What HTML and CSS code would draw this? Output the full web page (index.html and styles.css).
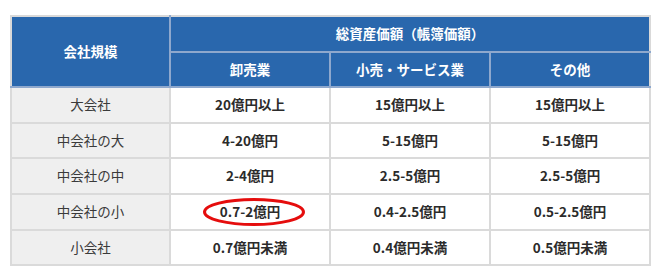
FILE: index.html
```html
<!DOCTYPE html>
<html lang="ja">
<head>
<meta charset="utf-8">
<link rel="stylesheet" href="styles.css">
</head>
<body>
<table class="scale">
  <colgroup>
    <col class="c1"><col class="c2"><col class="c2"><col class="c2">
  </colgroup>
  <thead>
    <tr>
      <th rowspan="2">会社規模</th>
      <th colspan="3">総資産価額（帳簿価額）</th>
    </tr>
    <tr>
      <th>卸売業</th>
      <th>小売・サービス業</th>
      <th>その他</th>
    </tr>
  </thead>
  <tbody>
    <tr><td class="label">大会社</td><td>20億円以上</td><td>15億円以上</td><td>15億円以上</td></tr>
    <tr><td class="label">中会社の大</td><td>4-20億円</td><td>5-15億円</td><td>5-15億円</td></tr>
    <tr><td class="label">中会社の中</td><td>2-4億円</td><td>2.5-5億円</td><td>2.5-5億円</td></tr>
    <tr><td class="label">中会社の小</td><td class="marked">0.7-2億円<svg class="circle" width="104" height="30" viewBox="0 0 104 30"><ellipse cx="52" cy="15" rx="49.5" ry="12.5" fill="none" stroke="#e50d0d" stroke-width="3"/></svg></td><td>0.4-2.5億円</td><td>0.5-2.5億円</td></tr>
    <tr><td class="label">小会社</td><td>0.7億円未満</td><td>0.4億円未満</td><td>0.5億円未満</td></tr>
  </tbody>
</table>
</body>
</html>
```
FILE: styles.css
```css
html, body {
  margin: 0;
  padding: 0;
  background: #ffffff;
}
body {
  padding: 15px 0 0 10px;
  font-family: "Noto Sans CJK JP", "Noto Sans", sans-serif;
  font-size: 13.5px;
  color: #333333;
}
.scale {
  border-collapse: collapse;
  table-layout: fixed;
  width: 640px;
  border: 2px solid #d9d9d9;
}
.c1 { width: 159px; }
.c2 { width: 160px; }
th {
  background: #2967ad;
  color: #ffffff;
  font-weight: bold;
  height: 33.6px;
  padding: 0;
  border: 2px solid #8ea8cd;
  text-align: center;
  line-height: 1;
}
thead tr:first-child th {
  border-top-color: #d9d9d9;
}
thead tr:first-child th:first-child { border-left-color: #d9d9d9; }
thead tr th:last-child { border-right-color: #d9d9d9; }
td {
  height: 33.6px;
  padding: 0;
  border: 2px solid #dadada;
  text-align: center;
  font-weight: bold;
  color: #2b2b2b;
  line-height: 1;
}
td.label {
  background: #efefef;
  font-weight: normal;
  color: #3a3a3a;
}
td.marked {
  position: relative;
}
.circle {
  position: absolute;
  left: 31px;
  top: 2px;
}
```
